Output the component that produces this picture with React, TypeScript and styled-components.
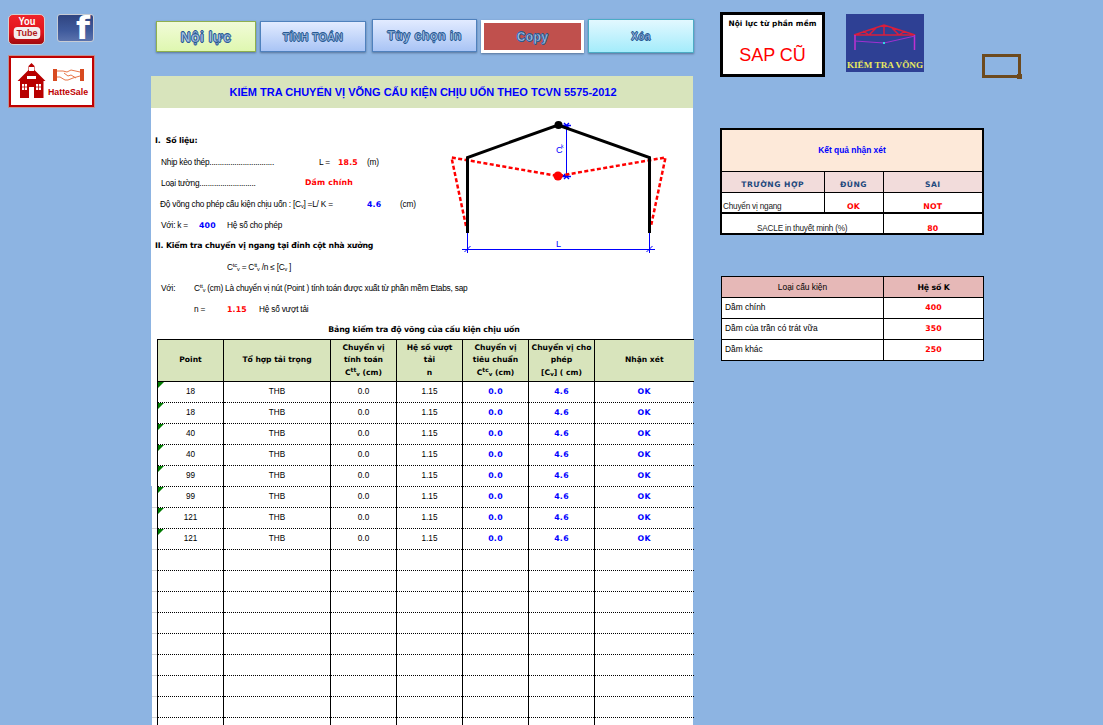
import styled, { createGlobalStyle } from "styled-components";

const SANS = `"Liberation Sans", Arial, sans-serif`;
const WIDE = `"DejaVu Sans", Verdana, sans-serif`;

const GlobalStyle = createGlobalStyle`
  html, body {
    margin: 0;
    padding: 0;
    background: #8db4e2;
    overflow: hidden;
  }
  * {
    box-sizing: border-box;
  }
`;

const Page = styled.div`
  display: grid;
  grid-template-columns: 151px 542px 1fr;
  height: 725px;
  overflow: hidden;
  background: #8db4e2;
  font-family: ${SANS};
  color: #000;
`;

/* ---------- left column: logos ---------- */

const LogoColumn = styled.div`
  display: flex;
  flex-direction: column;
  padding: 14px 0 0 8px;
`;

const SocialRow = styled.div`
  display: flex;
  gap: 12px;
  align-items: flex-start;
`;

const YoutubeBadge = styled.div`
  width: 37px;
  height: 31px;
  border-radius: 5px;
  background: linear-gradient(#f0242a 0%, #e0141c 60%, #a00a0e 100%);
  border: 1px solid #d8d0d0;
  display: flex;
  flex-direction: column;
  align-items: center;
  color: #fff;
  font-weight: 700;
  line-height: 1;
`;

const YouLabel = styled.span`
  font-size: 11px;
  margin-top: 1px;
  transform: scaleX(0.85);
`;

const TubeLabel = styled.span`
  font-size: 9.5px;
  background: #f4eeee;
  color: #b01a1e;
  border-radius: 4px;
  padding: 1px 3px;
  margin-top: 0;
  transform: scaleX(0.95);
`;

const FacebookBadge = styled.div`
  width: 37px;
  height: 28px;
  border-radius: 3px;
  border: 1px solid #c8ccd4;
  background: linear-gradient(#2f4480 0%, #3f5a9c 60%, #5a72ac 100%);
  display: flex;
  justify-content: flex-end;
  padding-right: 3px;
  color: #fff;
  font-family: ${WIDE};
  font-weight: 700;
  font-size: 32px;
  line-height: 26px;
`;

const SaleBadge = styled.div`
  width: 85px;
  height: 51px;
  margin: 11px 0 0 1px;
  background: #fff;
  border: 2px solid #c00000;
  outline: 1px solid #c09090;
  display: flex;
  gap: 2px;
  padding: 5px 0 0 6px;
`;

const SaleSide = styled.div`
  display: flex;
  flex-direction: column;
  align-items: center;
  gap: 7px;
  padding-top: 6px;
`;

const SaleName = styled.span`
  font-size: 8.8px;
  font-weight: 700;
  color: #c00000;
  line-height: 9px;
`;

/* ---------- centre column ---------- */

const CenterColumn = styled.div`
  display: flex;
  flex-direction: column;
  min-width: 0;
`;

const Toolbar = styled.div`
  height: 76px;
  flex: none;
  display: flex;
  align-items: flex-start;
  padding-left: 5px;
`;

const ToolButton = styled.button<{
  $w: number;
  $h: number;
  $top: number;
  $gap: number;
  $from: string;
  $to: string;
  $line: string;
  $size: number;
  $lineWidth?: number;
}>`
  width: ${(p) => p.$w}px;
  height: ${(p) => p.$h}px;
  margin: ${(p) => p.$top}px ${(p) => p.$gap}px 0 0;
  padding: 0;
  flex: none;
  border: ${(p) => p.$lineWidth ?? 1}px solid ${(p) => p.$line};
  background: linear-gradient(${(p) => p.$from}, ${(p) => p.$to});
  box-shadow: 0 1px 2px rgba(40, 60, 90, 0.55);
  font-family: ${SANS};
  font-weight: 700;
  font-size: ${(p) => p.$size}px;
  color: #a9c3e6;
  letter-spacing: 0.4px;
  -webkit-text-stroke: 0.4px #1f5590;
  text-shadow:
    -0.7px 0 0 #2a5c96, 0.7px 0 0 #2a5c96, 0 -0.7px 0 #2a5c96, 0 0.7px 0 #2a5c96;
`;

const Sheet = styled.div`
  flex: 1;
  min-height: 0;
  background:
    linear-gradient(#fff, #fff) 0 0 / 100% 410px no-repeat,
    linear-gradient(to right, #8db4e2 1px, #fff 1px);
`;

const SheetTitle = styled.div`
  height: 32px;
  background: #d8e4bc;
  display: flex;
  align-items: center;
  justify-content: center;
  color: #0000ff;
  font-weight: 700;
  font-size: 11px;
  padding-left: 2px;
`;

const TopRow = styled.div`
  display: flex;
  height: 148px;
`;

const TopText = styled.div`
  width: 279px;
  flex: none;
  padding-top: 22px;
`;

const Diagram = styled.svg`
  width: 250px;
  height: 148px;
  flex: none;
  display: block;
`;

const Line = styled.div<{ $left?: number }>`
  height: 21px;
  display: flex;
  align-items: center;
  white-space: nowrap;
  padding-left: ${(p) => p.$left ?? 9}px;
  font-size: 8.3px;
  letter-spacing: -0.22px;
`;

const Field = styled.span<{ $w?: number }>`
  display: inline-block;
  flex: none;
  width: ${(p) => (p.$w ? `${p.$w}px` : "auto")};
`;

const Strong = styled.span`
  font-family: ${WIDE};
  font-weight: 700;
  font-size: 7.8px;
  letter-spacing: -0.15px;
`;

const Value = styled(Strong)<{ $tone: "red" | "blue" }>`
  letter-spacing: 0.15px;
  color: ${(p) => (p.$tone === "red" ? "#ff0000" : "#0000ff")};
`;

const Sup = styled.sup`
  font-size: 6px;
  line-height: 0;
  vertical-align: 3px;
`;

const Sub = styled.sub`
  font-size: 5.5px;
  line-height: 0;
  vertical-align: -1px;
`;

const TableCaption = styled.div`
  height: 20px;
  display: flex;
  align-items: center;
  justify-content: center;
  padding-left: 4px;
`;

const CheckTable = styled.table`
  width: 536px;
  margin-left: 6px;
  border-collapse: collapse;
  table-layout: fixed;
`;

const HeadCell = styled.th`
  height: 42px;
  padding: 0;
  background: #d8e4bc;
  border: 1px solid #000;
  font-family: ${WIDE};
  font-weight: 700;
  font-size: 7.6px;
  line-height: 12.5px;
  letter-spacing: 0;
  text-align: center;
  white-space: nowrap;
  &:last-child {
    border-right: 0;
  }
`;

const DataCell = styled.td<{ $flag?: boolean; $value?: boolean; $edge?: boolean }>`
  position: relative;
  height: 21px;
  padding: 0 0 2px;
  border-left: 1px solid #000;
  border-right: 1px solid #000;
  border-bottom: 1px dotted #000;
  text-align: center;
  font-family: ${(p) => (p.$value ? WIDE : SANS)};
  font-weight: ${(p) => (p.$value ? 700 : 400)};
  font-size: ${(p) => (p.$value ? 7.8 : 8.2)}px;
  letter-spacing: ${(p) => (p.$value ? 0.3 : 0)}px;
  color: ${(p) => (p.$value ? "#0000ff" : "#000")};
  &:last-child {
    border-right: 0;
  }
  &::before {
    content: "";
    display: ${(p) => (p.$flag ? "block" : "none")};
    position: absolute;
    left: 0;
    top: 0;
    border-top: 6px solid #007a00;
    border-right: 6px solid transparent;
  }
  &::after {
    content: "";
    display: ${(p) => (p.$edge ? "block" : "none")};
    position: absolute;
    left: -6px;
    bottom: -1px;
    width: 5px;
    height: 1px;
    background: #d4d4d4;
  }
`;

/* ---------- right column ---------- */

const RightColumn = styled.div`
  display: flex;
  flex-direction: column;
  padding-left: 27px;
`;

const TopBadges = styled.div`
  height: 128px;
  flex: none;
  display: flex;
  align-items: flex-start;
`;

const SapBox = styled.div`
  width: 105px;
  height: 65px;
  margin-top: 12px;
  background: #fff;
  border: 3px solid #000;
  display: flex;
  flex-direction: column;
  align-items: center;
`;

const SapCaption = styled(Strong)`
  margin-top: 4px;
  font-size: 7.4px;
  letter-spacing: 0.1px;
  line-height: 10px;
  white-space: nowrap;
`;

const SapName = styled.span`
  margin-top: 15px;
  color: #ff0000;
  font-size: 18px;
  line-height: 22px;
`;

const VongLogo = styled.div`
  width: 78px;
  height: 58px;
  margin: 14px 0 0 21px;
  background: #2e4094;
  display: flex;
  flex-direction: column;
  align-items: center;
`;

const VongName = styled.span`
  font-family: "Liberation Serif", serif;
  font-weight: 700;
  font-size: 9.2px;
  line-height: 12px;
  color: #e8e860;
  white-space: nowrap;
`;

const Frame = styled.div`
  position: relative;
  width: 39px;
  height: 24px;
  margin: 54px 0 0 58px;
  border: 3px solid #6d4a1e;
  &::after {
    content: "";
    position: absolute;
    right: -4px;
    bottom: -4px;
    width: 5px;
    height: 5px;
    background: #6d4a1e;
  }
`;

const ResultTable = styled.table`
  width: 264px;
  border-collapse: collapse;
  table-layout: fixed;
  background: #fff;
  border: 2px solid #000;
`;

const ResultTitle = styled.td`
  height: 42px;
  background: #fde9d9;
  border-bottom: 1px solid #000;
  text-align: center;
  color: #0000ff;
  font-size: 8.4px;
  font-weight: 700;
`;

const ResultHead = styled.td`
  height: 21px;
  padding: 6px 0 0;
  background: #f2dcdb;
  border: 1px solid #000;
  text-align: center;
  font-family: ${WIDE};
  font-weight: 700;
  font-size: 7.6px;
  letter-spacing: 0.5px;
  color: #1f497d;
`;

const ResultCell = styled.td<{ $thick?: boolean; $align?: string }>`
  height: 21px;
  padding: 9px 0 0 ${(p) => (p.$align === "left" ? 1 : 0)}px;
  border-right: 1px solid #000;
  border-bottom: ${(p) => (p.$thick ? 2 : 0)}px solid #000;
  text-align: ${(p) => p.$align ?? "center"};
  font-size: 8.2px;
  letter-spacing: -0.2px;
  color: #222;
  &:last-child {
    border-right: 0;
  }
`;

const FactorTable = styled.table`
  width: 262px;
  margin: 41px 0 0 1px;
  border-collapse: collapse;
  table-layout: fixed;
  background: #fff;
`;

const FactorHead = styled.td`
  height: 21px;
  background: #e6b8b7;
  border: 1px solid #000;
  text-align: center;
  font-size: 8.4px;
`;

const FactorCell = styled.td<{ $center?: boolean }>`
  height: 21px;
  padding: 0 0 2px ${(p) => (p.$center ? 0 : 3)}px;
  border: 1px solid #000;
  text-align: ${(p) => (p.$center ? "center" : "left")};
  font-size: 8.4px;
`;

const POINTS = ["18", "18", "40", "40", "99", "99", "121", "121"];
const EMPTY_ROWS = 9;
const COLS = [66, 107, 66, 66, 66, 66, 99];
const FACTORS = [
  { name: "Dầm chính", k: "400" },
  { name: "Dầm của trần có trát vữa", k: "350" },
  { name: "Dầm khác", k: "250" },
];

function HouseIcon() {
  return (
    <svg width="29" height="36" viewBox="0 0 29 36">
      <path d="M14.5 0l3 3v4l11 11h-2v17H3V18H.5l11-11V3z" fill="#b80000" />
      <rect x="12" y="4" width="5" height="4" fill="#fff" />
      <rect x="5" y="21" width="5" height="6" fill="#fff" />
      <rect x="19" y="21" width="5" height="6" fill="#fff" />
      <rect x="12" y="24" width="5" height="11" fill="#fff" />
      <path d="M5 24h5M19 24h5M7.5 21v6M21.5 21v6" stroke="#b80000" strokeWidth="0.8" />
      <rect x="10" y="13" width="9" height="3" fill="#fff" />
    </svg>
  );
}

function HandshakeIcon() {
  return (
    <svg width="31" height="12" viewBox="0 0 31 12">
      <rect x="0" y="0" width="4" height="12" fill="#d84a20" />
      <rect x="27" y="0" width="4" height="12" fill="#d84a20" />
      <path
        d="M4 2h6l4 1 4-2 9 2M4 8l3 0 5 3 3 0 5-2 7-2M11 4l4 3 3-1 5 3"
        fill="none"
        stroke="#e8764a"
        strokeWidth="1"
      />
    </svg>
  );
}

function FrameDiagram() {
  return (
    <Diagram viewBox="430 108 250 148">
      {/* dimension lines */}
      <g stroke="#0000ff" strokeWidth="1" fill="none">
        <path d="M467.5 233v20M649.5 233v20M462 249.5h193" />
        <path d="M464.5 252l6-6M646.5 252l6-6" />
        <path d="M566.5 125v52" />
        <path d="M562 125.500h9M562 176.500h9" strokeWidth="1.400" />
        <path d="M564 123l5 5M569 123l-5 5M564 174l5 5M569 174l-5 5" strokeWidth="1.400" />
        <path d="M558 176h8" strokeWidth="2" />
      </g>
      <text x="556" y="153" fontSize="9" fill="#0000ff" fontFamily={SANS}>
        C
      </text>
      <text x="561" y="148" fontSize="5" fill="#0000ff" fontFamily={SANS}>
        k
      </text>
      <text x="556" y="247" fontSize="9" fill="#0000ff" fontFamily={SANS}>
        L
      </text>
      {/* deformed shape */}
      <path
        d="M466 226L451.5 157.5L558 176L665.5 157.5L651 226"
        fill="none"
        stroke="#ff0000"
        strokeWidth="2.5"
        strokeDasharray="4 2.4"
      />
      <circle cx="558" cy="176" r="4.5" fill="#ff0000" />
      {/* frame */}
      <path
        d="M467.5 233V157.5L558 125L649.5 157.5V233"
        fill="none"
        stroke="#000"
        strokeWidth="3"
      />
      <circle cx="558.5" cy="125" r="4" fill="#000" />
    </Diagram>
  );
}

function TrussIcon() {
  return (
    <svg width="78" height="45" viewBox="0 0 78 45">
      <path
        d="M8 21L38 11L69 21H8M38 11v10M23 21l7-7M23 21l-6-4M53 21l-7-7M53 21l6-4"
        fill="none"
        stroke="#d81e3c"
        strokeWidth="1.5"
      />
      <path d="M9 21v15M68.5 21v15" stroke="#c030d0" strokeWidth="1.5" />
      <path d="M9 27L38 29L69 22" fill="none" stroke="#a030d0" strokeWidth="1" />
      <rect x="37" y="28" width="2" height="2" fill="#30d8e0" />
    </svg>
  );
}

export default function App() {
  return (
    <Page>
      <GlobalStyle />

      <LogoColumn>
        <SocialRow>
          <YoutubeBadge>
            <YouLabel>You</YouLabel>
            <TubeLabel>Tube</TubeLabel>
          </YoutubeBadge>
          <FacebookBadge>f</FacebookBadge>
        </SocialRow>
        <SaleBadge>
          <HouseIcon />
          <SaleSide>
            <HandshakeIcon />
            <SaleName>HatteSale</SaleName>
          </SaleSide>
        </SaleBadge>
      </LogoColumn>

      <CenterColumn>
        <Toolbar>
          <ToolButton $w={100} $h={31} $top={21} $gap={4} $from="#f1fbd8" $to="#dff7b0" $line="#8fb04e" $size={14}>
            Nội lực
          </ToolButton>
          <ToolButton $w={106} $h={31} $top={21} $gap={6} $from="#e2ebff" $to="#a9c4f5" $line="#4f81bd" $size={10.5}>
            TÍNH TOÁN
          </ToolButton>
          <ToolButton $w={105} $h={33} $top={19} $gap={4} $from="#e2ebff" $to="#a9c4f5" $line="#4f81bd" $size={12.5}>
            Tùy chọn in
          </ToolButton>
          <ToolButton $w={103} $h={33} $top={20} $gap={4} $from="#c0504d" $to="#c0504d" $line="#fff" $lineWidth={3} $size={12}>
            Copy
          </ToolButton>
          <ToolButton $w={106} $h={34} $top={19} $gap={0} $from="#e2f8ff" $to="#a4ecfb" $line="#4bacc6" $size={10}>
            Xóa
          </ToolButton>
        </Toolbar>

        <Sheet>
          <SheetTitle>KIỂM TRA CHUYỂN VỊ VÕNG CẤU KIỆN CHỊU UỐN THEO TCVN 5575-2012</SheetTitle>

          <TopRow>
            <TopText>
              <Line $left={4}>
                <Strong>I.&nbsp;&nbsp;Số liệu:</Strong>
              </Line>
              <Line $left={10}>
                <Field $w={158}>Nhịp kèo thép...............................</Field>
                <Field $w={19}>L =</Field>
                <Field $w={29}>
                  <Value $tone="red">18.5</Value>
                </Field>
                <Field>(m)</Field>
              </Line>
              <Line $left={10}>
                <Field $w={144}>Loại tường...........................</Field>
                <Value $tone="red">Dầm chính</Value>
              </Line>
              <Line>
                <Field $w={207}>
                  Độ võng cho phép cấu kiện chịu uốn : [C<Sub>v</Sub>] =L/ K =
                </Field>
                <Field $w={33}>
                  <Value $tone="blue">4.6</Value>
                </Field>
                <Field>(cm)</Field>
              </Line>
              <Line $left={10}>
                <Field $w={38}>Với: k =</Field>
                <Field $w={28}>
                  <Value $tone="blue">400</Value>
                </Field>
                <Field>Hệ số cho phép</Field>
              </Line>
              <Line $left={4}>
                <Strong>II. Kiểm tra chuyển vị ngang tại đỉnh cột nhà xưởng</Strong>
              </Line>
            </TopText>
            <FrameDiagram />
          </TopRow>

          <Line $left={76}>
            <span>
              C<Sup>tc</Sup>
              <Sub>v</Sub> = C<Sup>tt</Sup>
              <Sub>v</Sub> /n ≤ [C<Sub>v</Sub> ]
            </span>
          </Line>
          <Line $left={10}>
            <Field $w={33}>Với:</Field>
            <span>
              C<Sup>tt</Sup>
              <Sub>v</Sub> (cm) Là chuyển vị nút (Point ) tính toán được xuất từ phần mềm Etabs, sap
            </span>
          </Line>
          <Line $left={43}>
            <Field $w={33}>n =</Field>
            <Field $w={32}>
              <Value $tone="red">1.15</Value>
            </Field>
            <Field>Hệ số vượt tải</Field>
          </Line>

          <TableCaption>
            <Strong>Bảng kiểm tra độ võng của cấu kiện chịu uốn</Strong>
          </TableCaption>

          <CheckTable>
            <colgroup>
              {COLS.map((w, i) => (
                <col key={i} style={{ width: w }} />
              ))}
            </colgroup>
            <thead>
              <tr>
                <HeadCell>Point</HeadCell>
                <HeadCell>Tổ hợp tải trọng</HeadCell>
                <HeadCell>
                  Chuyển vị
                  <br />
                  tính toán
                  <br />C<Sup>tt</Sup>
                  <Sub>v</Sub> (cm)
                </HeadCell>
                <HeadCell>
                  Hệ số vượt
                  <br />
                  tải
                  <br />n
                </HeadCell>
                <HeadCell>
                  Chuyển vị
                  <br />
                  tiêu chuẩn
                  <br />C<Sup>tc</Sup>
                  <Sub>v</Sub> (cm)
                </HeadCell>
                <HeadCell>
                  Chuyển vị cho
                  <br />
                  phép
                  <br />
                  [C<Sub>v</Sub>] ( cm)
                </HeadCell>
                <HeadCell>Nhận xét</HeadCell>
              </tr>
            </thead>
            <tbody>
              {POINTS.map((point, i) => (
                <tr key={i}>
                  <DataCell $flag $edge={i >= 5}>
                    {point}
                  </DataCell>
                  <DataCell>THB</DataCell>
                  <DataCell>0.0</DataCell>
                  <DataCell>1.15</DataCell>
                  <DataCell $value>0.0</DataCell>
                  <DataCell $value>4.6</DataCell>
                  <DataCell $value>OK</DataCell>
                </tr>
              ))}
              {Array.from({ length: EMPTY_ROWS }, (_, i) => (
                <tr key={i}>
                  {COLS.map((_w, c) => (
                    <DataCell key={c} $edge={c === 0} />
                  ))}
                </tr>
              ))}
            </tbody>
          </CheckTable>
        </Sheet>
      </CenterColumn>

      <RightColumn>
        <TopBadges>
          <SapBox>
            <SapCaption>Nội lực từ phần mềm</SapCaption>
            <SapName>SAP CŨ</SapName>
          </SapBox>
          <VongLogo>
            <TrussIcon />
            <VongName>KIỂM TRA VÕNG</VongName>
          </VongLogo>
          <Frame />
        </TopBadges>

        <ResultTable>
          <colgroup>
            <col style={{ width: 103 }} />
            <col style={{ width: 59 }} />
            <col style={{ width: 100 }} />
          </colgroup>
          <tbody>
            <tr>
              <ResultTitle colSpan={3}>Kết quả nhận xét</ResultTitle>
            </tr>
            <tr>
              <ResultHead>TRƯỜNG HỢP</ResultHead>
              <ResultHead>ĐÚNG</ResultHead>
              <ResultHead>SAI</ResultHead>
            </tr>
            <tr>
              <ResultCell $thick $align="left">
                Chuyển vị ngang
              </ResultCell>
              <ResultCell $thick>
                <Value $tone="red">OK</Value>
              </ResultCell>
              <ResultCell $thick>
                <Value $tone="red">NOT</Value>
              </ResultCell>
            </tr>
            <tr>
              <ResultCell colSpan={2}>SACLE in thuyết minh (%)</ResultCell>
              <ResultCell>
                <Value $tone="red">80</Value>
              </ResultCell>
            </tr>
          </tbody>
        </ResultTable>

        <FactorTable>
          <colgroup>
            <col style={{ width: 162 }} />
            <col style={{ width: 100 }} />
          </colgroup>
          <tbody>
            <tr>
              <FactorHead>Loại cấu kiện</FactorHead>
              <FactorHead>
                <Strong>Hệ số K</Strong>
              </FactorHead>
            </tr>
            {FACTORS.map((f) => (
              <tr key={f.name}>
                <FactorCell>{f.name}</FactorCell>
                <FactorCell $center>
                  <Value $tone="red">{f.k}</Value>
                </FactorCell>
              </tr>
            ))}
          </tbody>
        </FactorTable>
      </RightColumn>
    </Page>
  );
}
